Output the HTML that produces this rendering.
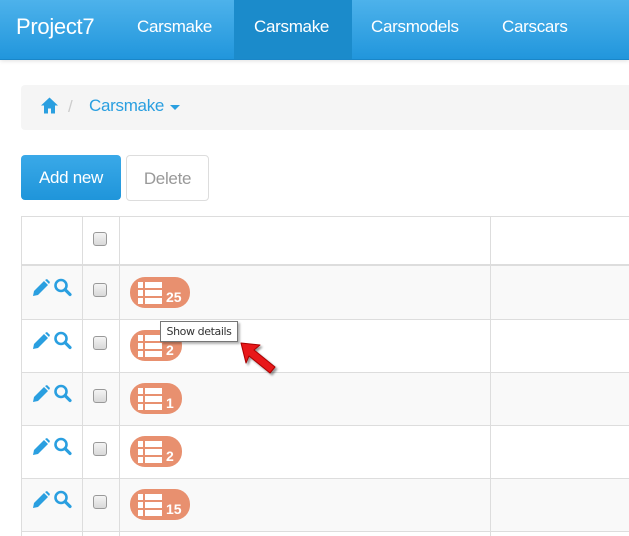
<!DOCTYPE html><html><head><style>
body{margin:0;width:629px;height:535px;overflow:hidden;font-family:"Liberation Sans",sans-serif;background:#fff;position:relative}
.nav{position:absolute;left:0;top:0;width:629px;height:59px;background:linear-gradient(#4db2eb,#2196dc);border-bottom:1px solid #1a86c8;box-shadow:0 1px 4px rgba(0,0,0,.12)}
.nav span{position:absolute;top:0;line-height:54px;color:#fff;font-size:17px;letter-spacing:-.3px}
.act{position:absolute;left:234px;top:0;width:118px;height:59px;background:#1b8bcb}
.bc{position:absolute;left:21px;top:85px;width:620px;height:45px;background:#f5f5f5;border-radius:4px}
.btn{position:absolute;top:155px;height:45px;line-height:45px;border-radius:4px;font-size:17px;text-align:center;letter-spacing:-.3px}
.hl{position:absolute;height:1px;background:#ddd;left:21px;width:620px}
.vl{position:absolute;width:1px;background:#ddd;top:216px;height:320px}
.cb{position:absolute;left:93px;width:12px;height:12px;border:1px solid #999;border-radius:3px;background:linear-gradient(#f4f4f4,#d8d8d8)}
.badge{position:absolute;left:130px;height:31px;background:#e8906f;border-radius:15px}
.badge b{position:absolute;left:36px;bottom:3px;color:#fff;font-size:14px}
</style></head><body>
<div class="nav"><div class="act"></div>
<span style="left:16px;font-size:22px">Project7</span>
<span style="left:137px">Carsmake</span>
<span style="left:254px">Carsmake</span>
<span style="left:371px">Carsmodels</span>
<span style="left:502px">Carscars</span></div>
<div class="bc">
<svg style="position:absolute;left:19px;top:11px" width="19" height="19" viewBox="0 0 19 18"><path d="M9.5 1L1 9h3v8h4v-5h3v5h4V9h3z" fill="#2a9fe0"/></svg>
<span style="position:absolute;left:47px;top:12px;color:#ccc;font-size:17px">/</span>
<span style="position:absolute;left:68px;top:11px;color:#2a9fe0;font-size:17px;letter-spacing:-.3px">Carsmake</span>
<svg style="position:absolute;left:149px;top:20px" width="10" height="6"><path d="M0 0h10L5 5z" fill="#2a9fe0"/></svg></div>
<div class="btn" style="left:21px;width:100px;background:linear-gradient(#3aa9e8,#1f95da);color:#fff;border:0">Add new</div>
<div class="btn" style="left:126px;width:81px;height:44px;border:1px solid #ddd;color:#999;background:#fff">Delete</div>
<div style="position:absolute;left:21px;top:266px;width:620px;height:53px;background:#f9f9f9"></div>
<div style="position:absolute;left:21px;top:372px;width:620px;height:53px;background:#f9f9f9"></div>
<div style="position:absolute;left:21px;top:478px;width:620px;height:53px;background:#f9f9f9"></div>
<div class="hl" style="top:216px"></div><div class="hl" style="top:264px;height:2px"></div>
<div class="hl" style="top:319px"></div><div class="hl" style="top:372px"></div><div class="hl" style="top:425px"></div><div class="hl" style="top:478px"></div><div class="hl" style="top:531px"></div>
<div class="vl" style="left:21px"></div><div class="vl" style="left:82px"></div><div class="vl" style="left:119px"></div><div class="vl" style="left:490px"></div>
<div class="cb" style="top:232px"></div>
<div id="rows"></div>
<script>
var tops=[266,319,372,425,478],nums=["25","2","1","2","15"],w=[60,52,52,52,60],h="";
tops.forEach(function(t,i){
h+='<svg style="position:absolute;left:32px;top:'+(t+12)+'px" width="42" height="20" viewBox="0 0 42 20"><path d="M1 18l1-5L12 3l4 4L6 17z M13 2l2-1 3 3-1 2z" fill="#2a9fe0"/><circle cx="29" cy="7.5" r="5.5" fill="none" stroke="#2a9fe0" stroke-width="2.6"/><path d="M33 11.5l5 5" stroke="#2a9fe0" stroke-width="3.2" stroke-linecap="round"/></svg>';
h+='<div class="cb" style="top:'+(t+17)+'px"></div>';
h+='<div class="badge" style="top:'+(t+11)+'px;width:'+w[i]+'px"><svg style="position:absolute;left:8px;top:5px" width="24" height="22"><g fill="#fff"><rect x="0" y="0" width="5" height="6"/><rect x="7" y="0" width="17" height="6"/><rect x="0" y="8" width="5" height="6"/><rect x="7" y="8" width="17" height="6"/><rect x="0" y="16" width="5" height="6"/><rect x="7" y="16" width="17" height="6"/></g></svg><b>'+nums[i]+'</b></div>';
});
document.getElementById("rows").innerHTML=h;
</script>
<div style="position:absolute;left:160px;top:321px;width:76px;height:19px;border:1px solid #767676;background:#fff;font-size:11px;line-height:19px;text-align:center;box-shadow:2px 2px 2px rgba(0,0,0,.3);color:#333;font-family:'DejaVu Sans',sans-serif;letter-spacing:-.4px">Show details</div>
<svg style="position:absolute;left:236px;top:336px" width="52" height="48"><path d="M5 7l19 2-6 5 21 17-5 6-21-17-3 7z" fill="#e8181a" stroke="#a00" stroke-width="1" stroke-linejoin="round" style="filter:drop-shadow(2px 2px 1px rgba(0,0,0,.4))"/></svg>
</body></html>
